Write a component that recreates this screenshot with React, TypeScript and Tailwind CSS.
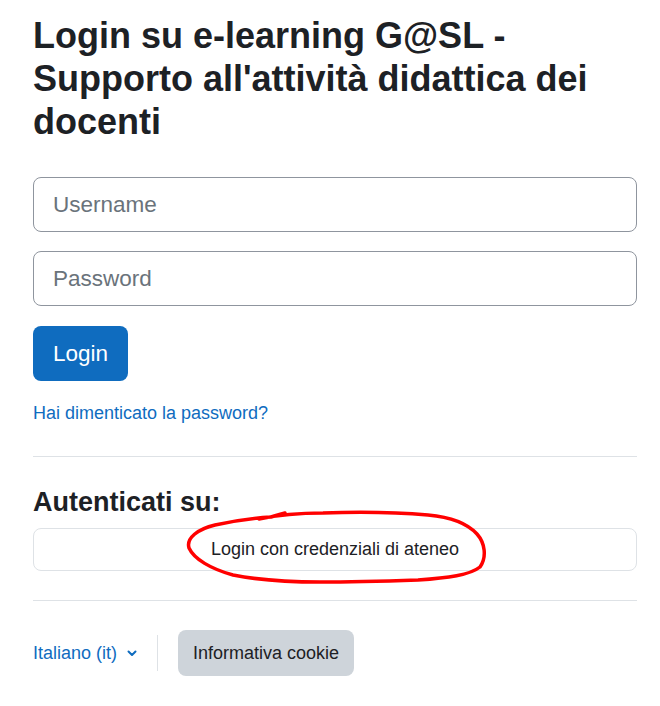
import React from 'react';

const font = { fontFamily: '"Liberation Sans", Arial, sans-serif' };

// hand-drawn red annotation around the identity provider button
const Scribble: React.FC = () => (
  <svg
    className="pointer-events-none absolute left-0 top-0 overflow-visible"
    width="1"
    height="1"
    fill="none"
  >
    <path
      d="M 226 -9 C 240 -12 262 -15 290 -15 C 320 -16 360 -16 395 -13 C 417 -11 434 -5 444 6 C 452 15 454 29 447 39 C 437 47 415 50 385 52 C 355 53 320 54 287 54 C 255 54 225 52 200 47 C 178 41 161 31 156 20 C 153 10 165 1 182 -3 C 200 -7 220 -10 238 -11 C 244 -13 249 -14 252 -15"
      stroke="#ff0000"
      strokeWidth="3.5"
      strokeLinecap="round"
      strokeLinejoin="round"
    />
  </svg>
);

export default function App() {
  return (
    <div className="min-h-[706px] bg-white pl-[33px] pr-[23px] pt-[14px] text-[#1d2125]" style={font}>
      <h2 className="text-[36px] font-bold leading-[43px]">
        Login su e-learning G@SL - Supporto all'attività didattica dei docenti
      </h2>

      <form className="mt-[34px] flex flex-col" onSubmit={e => e.preventDefault()}>
        <input
          type="text"
          placeholder="Username"
          className="h-[55px] w-full rounded-[8px] border border-[#8f959e] px-[19px] text-[22.5px] text-[#1d2125] placeholder:text-[#6a737b] outline-none"
        />
        <input
          type="password"
          placeholder="Password"
          className="mt-[19px] h-[55px] w-full rounded-[8px] border border-[#8f959e] px-[19px] text-[22.5px] text-[#1d2125] placeholder:text-[#6a737b] outline-none"
        />
        <div className="mt-[20px]">
          <button className="h-[55px] rounded-[8px] bg-[#0f6cbf] px-[20px] text-[22.5px] text-white">
            Login
          </button>
        </div>
      </form>

      <a href="#" className="mt-[19px] inline-block text-[18px] leading-[27px] text-[#0f6cbf]">
        Hai dimenticato la password?
      </a>

      <hr className="mt-[29px] border-t border-[#dee2e6]" />

      <h4 className="mt-[29px] text-[27px] font-bold leading-[32px]">Autenticati su:</h4>

      <div className="relative mt-[10px]">
        <button className="h-[43px] w-full rounded-[8px] border border-[#dee2e6] bg-white text-[18px] text-[#1d2125]">
          Login con credenziali di ateneo
        </button>
        <Scribble />
      </div>

      <hr className="mt-[29px] border-t border-[#dee2e6]" />

      <div className="mt-[29px] flex items-center">
        <a href="#" className="flex items-center gap-[10px] text-[18px] text-[#0f6cbf]">
          Italiano (it)
          <svg width="10" height="7" viewBox="0 0 10 7" fill="none">
            <path d="M1.5 1.5 L5 5 L8.5 1.5" stroke="#0f6cbf" strokeWidth="2" strokeLinecap="round" strokeLinejoin="round" />
          </svg>
        </a>
        <div className="ml-[20px] mr-[20px] h-[36px] w-px bg-[#dee2e6]" />
        <button className="h-[46px] rounded-[8px] bg-[#ced4da] px-[15px] text-[18px] text-[#1d2125]">
          Informativa cookie
        </button>
      </div>
    </div>
  );
}
